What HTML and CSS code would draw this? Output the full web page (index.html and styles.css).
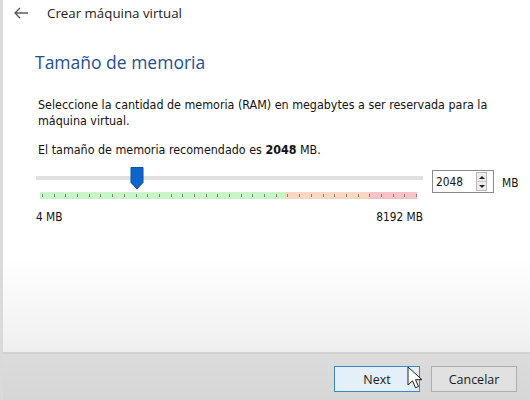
FILE: index.html
```html
<!DOCTYPE html>
<html lang="es">
<head>
<meta charset="utf-8">
<title>Crear máquina virtual</title>
<link rel="stylesheet" href="styles.css">
</head>
<body>
<div class="window">
  <div class="topbar">
    <svg class="back" width="16" height="12" viewBox="0 0 16 12"><path d="M15 6H2M7 1L2 6l5 5" fill="none" stroke="#5a5a5a" stroke-width="1.4"/></svg>
    <span class="title">Crear máquina virtual</span>
  </div>
  <div class="content">
    <h1 class="heading">Tamaño de memoria</h1>
    <p class="text">Seleccione la cantidad de memoria (RAM) en megabytes a ser reservada para la máquina virtual.</p>
    <p class="text rec">El tamaño de memoria recomendado es <b>2048</b> MB.</p>
    <div class="slider-row">
      <div class="slider">
        <div class="track"></div>
        <svg class="thumb" style="left:94px" width="14" height="23" viewBox="0 0 14 23"><path d="M1 .5h12v15l-6 6.5-6-6.5z" fill="#0d64c9" stroke="#0b4f9f" stroke-width="1"/></svg>
        <div class="band">
          <div class="ticks">
            <i></i><i></i><i></i><i></i><i></i><i></i><i></i><i></i><i></i><i></i><i></i>
            <i></i><i></i><i></i><i></i><i></i><i></i><i></i><i></i><i></i><i></i><i></i>
            <i></i><i></i><i></i><i></i><i></i><i></i><i></i><i></i><i></i><i></i><i></i>
          </div>
        </div>
        <div class="labels"><span>4 MB</span><span>8192 MB</span></div>
      </div>
      <div class="spinbox">
        <span class="spin-value">2048</span>
        <div class="spin-btns">
          <div class="spin-btn"><span class="arrow up"></span></div>
          <div class="spin-btn"><span class="arrow down"></span></div>
        </div>
      </div>
      <span class="unit">MB</span>
    </div>
  </div>
  <div class="fill"></div>
  <div class="footer">
    <button class="btn btn-next">Next</button>
    <button class="btn">Cancelar</button>
    <svg class="cursor" width="16" height="24" viewBox="0 0 16 24"><path d="M1 1v18l4.5-4.2 3 7 3-1.3-3-6.8H15z" fill="#fff" stroke="#222" stroke-width="1" stroke-linejoin="round"/></svg>
  </div>
</div>
</body>
</html>
```

FILE: styles.css
```css
html, body {
  margin: 0;
  padding: 0;
}
body {
  width: 530px;
  height: 400px;
  overflow: hidden;
  background: #fff;
  font-family: "Open Sans", "Noto Sans", sans-serif;
  color: #1a1a1a;
}
.window {
  display: flex;
  flex-direction: column;
  height: 400px;
  border-left: 3px solid #dadada;
  box-sizing: border-box;
}
.topbar {
  height: 26px;
  display: flex;
  align-items: center;
}
.back {
  margin-left: 10px;
  margin-right: 18px;
}
.title {
  font-size: 13.3px;
  color: #1a1a1a;
}
.content {
  padding-left: 32px;
}
.heading {
  margin: 24px 0 0 0;
  font-weight: normal;
  font-size: 17.5px;
  line-height: 24px;
  color: #1f4f95;
}
.text {
  margin: 23px 0 0 3px;
  font-family: "DejaVu Sans Condensed", "DejaVu Sans", sans-serif;
  font-stretch: condensed;
  font-size: 12.4px;
  line-height: 16px;
  width: 470px;
  color: #111;
}
.text.rec {
  margin-top: 13px;
}
.slider-row {
  display: flex;
  align-items: flex-start;
  margin-top: 7px;
}
.slider {
  position: relative;
  width: 387px;
  margin-left: 1px;
}
.track {
  margin-top: 11px;
  height: 4px;
  background: #e0e0e0;
}
.thumb {
  position: absolute;
  top: 2px;
}
.band {
  margin: 12px 0 0 4px;
  width: 377px;
  height: 7px;
  padding-left: 2px;
  box-sizing: border-box;
  background: linear-gradient(to right, #c8f6c8 0, #c8f6c8 65%, #fcd8c3 65%, #fcd8c3 87.3%, #f8c3c7 87.3%);
  display: flex;
  align-items: center;
}
.ticks {
  flex: 1;
  display: flex;
  justify-content: space-between;
  height: 3px;
}
.ticks i {
  width: 1px;
  background: #7a887a;
}
.labels {
  margin-top: 11px;
  display: flex;
  justify-content: space-between;
  font-family: "DejaVu Sans Condensed", "DejaVu Sans", sans-serif;
  font-stretch: condensed;
  font-size: 11.8px;
  line-height: 14px;
  color: #111;
}
.spinbox {
  margin: 5px 0 0 9px;
  width: 62px;
  height: 23px;
  box-sizing: border-box;
  border: 1px solid #8c8c8c;
  background: #fff;
  display: flex;
  align-items: center;
  justify-content: space-between;
  padding: 0 6px 0 3px;
}
.spin-value {
  font-family: "DejaVu Sans Condensed", "DejaVu Sans", sans-serif;
  font-stretch: condensed;
  font-size: 11.8px;
  color: #111;
}
.spin-btns {
  display: flex;
  flex-direction: column;
  width: 11px;
  height: 19px;
  border: 1px solid #b8b8b8;
  box-sizing: border-box;
  background: #ececec;
}
.spin-btn {
  flex: 1;
  display: flex;
  align-items: center;
  justify-content: center;
}
.spin-btn + .spin-btn {
  border-top: 1px solid #c8c8c8;
}
.arrow {
  width: 0;
  height: 0;
  border-left: 3px solid transparent;
  border-right: 3px solid transparent;
}
.arrow.up {
  border-bottom: 3px solid #222;
}
.arrow.down {
  border-top: 3px solid #222;
}
.unit {
  margin: 11px 0 0 8px;
  font-family: "DejaVu Sans Condensed", "DejaVu Sans", sans-serif;
  font-stretch: condensed;
  font-size: 11.8px;
  color: #111;
}
.fill {
  flex: 1;
  background: linear-gradient(to bottom, #fff 0, #fff 25%, #efefef 100%);
}
.footer {
  position: relative;
  height: 48px;
  box-sizing: border-box;
  border-top: 2px solid #d2d2d2;
  background: linear-gradient(to bottom, #dcdcdc, #d6d6d6);
  display: flex;
  justify-content: flex-end;
  align-items: flex-start;
  gap: 11px;
  padding: 12px 13px 0 0;
}
.btn {
  width: 86px;
  height: 26px;
  box-sizing: border-box;
  border: 1px solid #adadad;
  background: #e1e1e1;
  font-family: "Open Sans", "Noto Sans", sans-serif;
  font-size: 12.5px;
  color: #1a1a1a;
  padding: 0;
}
.btn-next {
  background: #e3eff9;
  border-color: #3d86c6;
}
.cursor {
  position: absolute;
  left: 404px;
  top: 12px;
}
```
